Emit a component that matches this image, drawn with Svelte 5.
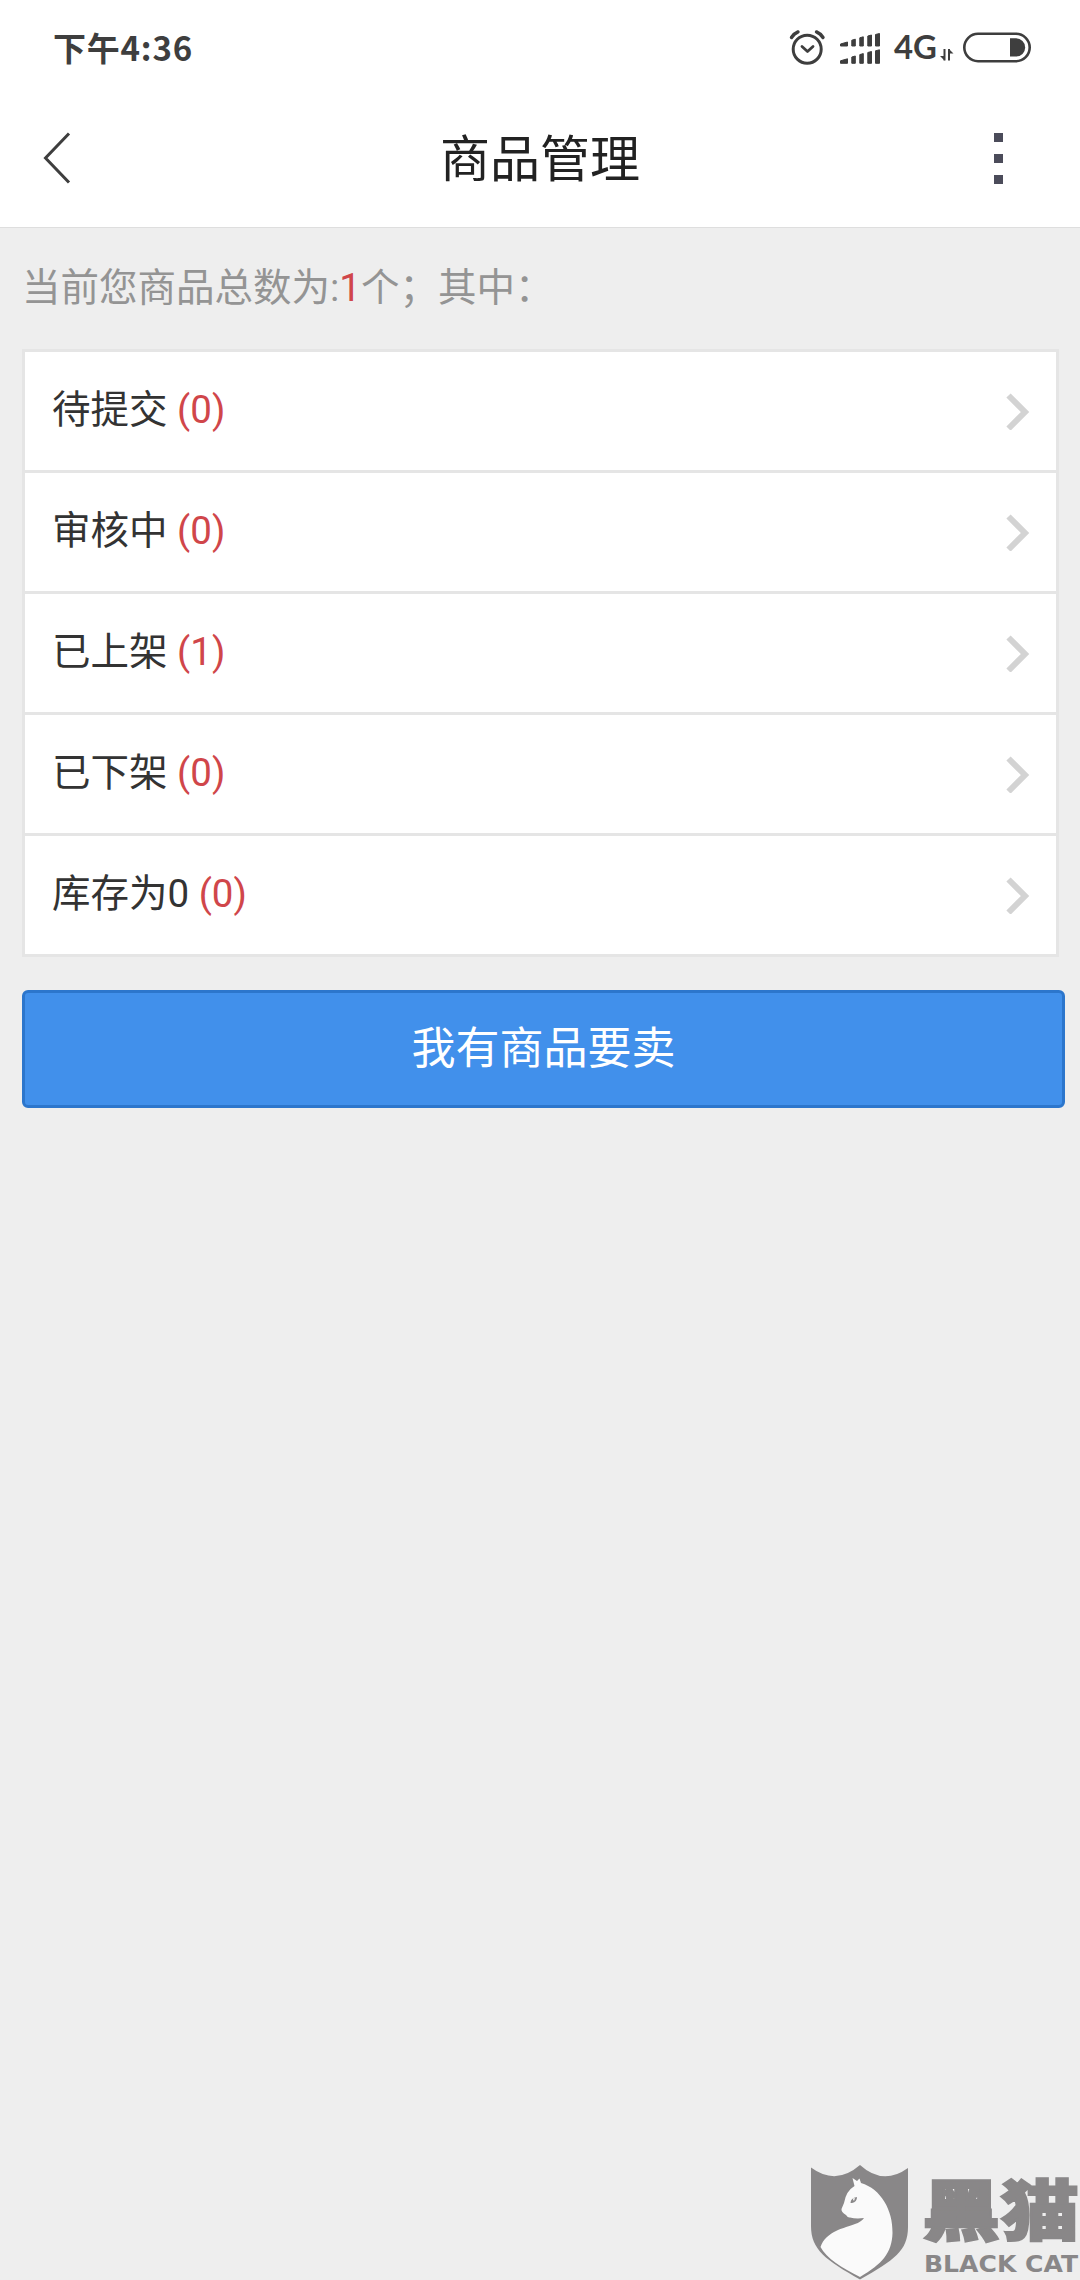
<script>
    const total = 1;

    const groups = [
        { name: '待提交', count: 0 },
        { name: '审核中', count: 0 },
        { name: '已上架', count: 1 },
        { name: '已下架', count: 0 },
        { name: '库存为0', count: 0 },
    ];
</script>

<div class="screen" lang="zh-CN">
    <header>
        <div class="status-bar">
            <span class="time">下午4:36</span>
            <svg class="status-icons" width="246" height="40" viewBox="0 0 246 40" fill="none" stroke="#3e3e3e">
                <!-- alarm -->
                <circle cx="19.200" cy="21.200" r="14" stroke-width="3" />
                <path d="M14 18.500l5.500 5 5.500-5" stroke-width="2.800" stroke-linecap="round" stroke-linejoin="round" />
                <path d="M3.500 9.500Q6 5.500 10 3.900M28.500 3.900Q32.500 5.500 35 9.500" stroke-width="3.400" stroke-linecap="round" />
                <!-- two sim signals -->
                <g fill="#3e3e3e" stroke-width="1" stroke-linejoin="round">
                    <path d="M52.500 16l7-2v4h-7zM63.800 12.200l3.500-1V18h-3.500zM71.800 9.800l3.500-1V18h-3.500zM79.800 8l3.700-1v11h-3.700zM87.500 6.500l4-1V18h-4z" />
                    <path d="M52.500 32.800l7-2v4.500h-7zM63.800 29l3.500-1v7.300h-3.500zM71.800 26.600l3.500-1v9.700h-3.500zM79.800 24.500l3.700-1v11.800h-3.700zM87.500 22.800l4-1v13.500h-4z" />
                </g>
                <text class="network" x="106" y="31.200" textLength="43" lengthAdjust="spacingAndGlyphs">4G</text>
                <path d="M156.500 21v11.500M161 32.500V21" stroke-width="2" />
                <path d="M152 28h4.500v4.500zM161 21l4.500 4.500h-4.500z" fill="#3e3e3e" stroke="none" />
                <!-- battery -->
                <rect x="176.300" y="5.800" width="65.400" height="27.400" rx="13.700" stroke-width="2.600" />
                <path d="M222 10.200h6a9.200 9.200 0 0 1 0 18.400H222z" fill="#3e3e3e" stroke="none" />
            </svg>
        </div>
        <div class="nav-bar">
            <svg width="30" height="54" viewBox="0 0 30 54" fill="none" stroke="#3e3e3e" stroke-width="3">
                <path d="M27 2.500L3.500 27l23.500 24.500" />
            </svg>
            <h1>商品管理</h1>
            <div class="more"><i></i><i></i><i></i></div>
        </div>
    </header>

    <main>
        <p class="summary">当前您商品总数为:<span class="total">{total}</span>个；其中：</p>

        <ul>
            {#each groups as group}
                <li>
                    <span class="name">{group.name} <span class="count">({group.count})</span></span>
                    <svg width="25" height="38" viewBox="0 0 25 38" fill="none" stroke="#d3d3d3" stroke-width="6">
                        <path d="M2.500 3.500L19 20 2.500 36.500" />
                    </svg>
                </li>
            {/each}
        </ul>

        <button>我有商品要卖</button>
    </main>

    <svg class="watermark" width="290" height="140" viewBox="0 0 290 140" fill="#898788">
        <path d="M21 27.500Q46 46 70 25Q93 46 118 28V87C118 111 104 120 70 139.500C36 120 21 110 21 86Z" />
        <path fill="#fafafa" d="M62.500 38L67 41 69.500 38.500 71 43C91 49 103 70 102.500 93C102 113 92 124 70 137C52 128 36 118 30.500 107C36 91 55 88 65 84Q71 82 74 78Q66 79 60 77.500Q58 78 56 75Q51 72 51.500 69L54 63Q56 51 64.500 46Z" />
        <path d="M60.500 63Q60.500 58 67 57Q67 62 62 63Z" />
        <path fill="#fafafa" d="M62.500 58.500l1.500 2.500 1-3z" />
        <text class="brand" x="132" y="94.500" textLength="157" lengthAdjust="spacingAndGlyphs">黑猫</text>
        <text class="brand-en" x="134" y="132" textLength="154" lengthAdjust="spacingAndGlyphs">BLACK CAT</text>
    </svg>
</div>

<style>
    :global(body) {
        margin: 0;
        background: #eee;
    }
    .screen {
        position: relative;
        width: 1080px;
        height: 2280px;
        overflow: hidden;
        background: #eee;
        font-family: Roboto, 'Noto Sans CJK SC', sans-serif;
    }
    header {
        box-sizing: border-box;
        height: 228px;
        background: #fff;
        border-bottom: 1px solid #dedede;
    }
    .status-bar {
        display: flex;
        justify-content: space-between;
        align-items: center;
        height: 95px;
        padding: 0 46px 0 53px;
    }
    .time {
        padding-bottom: 2px;
        font-family: 'Noto Sans CJK SC', sans-serif;
        font-size: 33px;
        font-weight: 700;
        line-height: 48px;
        letter-spacing: 0.8px;
        color: #3e3e3e;
    }
    .status-icons {
        width: 246px;
    }
    .network {
        font-family: Lato, sans-serif;
        font-size: 32px;
        font-weight: 700;
        fill: #3e3e3e;
        stroke: none;
    }
    .nav-bar {
        display: grid;
        grid-template-columns: 1fr auto 1fr;
        align-items: center;
        height: 126px;
        padding: 0 77px 0 42px;
    }
    h1 {
        margin: 0;
        padding: 3px 0 0 35px;
        font-size: 50px;
        font-weight: 400;
        line-height: 70px;
        color: #222;
    }
    .more {
        display: flex;
        flex-direction: column;
        align-items: flex-end;
        gap: 12px;
    }
    .more i {
        width: 9px;
        height: 9px;
        background: #4b4c5a;
    }
    main {
        padding: 32px 15px 0 22px;
    }
    .summary {
        margin: 0;
        font-size: 38.5px;
        line-height: 56px;
        color: #949494;
    }
    .total {
        color: #d0464a;
    }
    ul {
        margin: 33px 6px 33px 0;
        padding: 0;
        list-style: none;
        border: 3px solid #e5e5e5;
        background: #fff;
    }
    li {
        display: flex;
        justify-content: space-between;
        align-items: center;
        height: 118px;
        padding: 0 25px 0 27px;
    }
    li + li {
        border-top: 3px solid #e5e5e5;
    }
    .name {
        padding-bottom: 3px;
        font-size: 38.5px;
        line-height: 56px;
        color: #333;
    }
    .count {
        color: #d0464a;
    }
    button {
        display: block;
        box-sizing: border-box;
        width: 100%;
        height: 118px;
        padding: 0 0 8px;
        border: 3px solid #2c76cc;
        border-radius: 6px;
        background: #4190eb;
        color: #fff;
        font-family: inherit;
        font-size: 44px;
    }
    .watermark {
        position: absolute;
        right: 0;
        bottom: 0;
    }
    .brand {
        font-family: 'Noto Sans CJK SC', sans-serif;
        font-size: 66px;
        font-weight: 900;
        stroke: #898788;
        stroke-width: 2px;
    }
    .brand-en {
        font-family: 'DejaVu Sans', sans-serif;
        font-size: 22.5px;
        font-weight: 700;
    }
</style>
